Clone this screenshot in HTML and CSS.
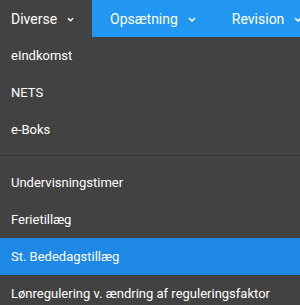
FILE: index.html
```html
<!DOCTYPE html>
<html lang="da">
<head>
  <meta charset="UTF-8">
  <title>Menu</title>
  <meta name="viewport" content="width=device-width, initial-scale=1.0">
  <link rel="stylesheet" href="styles.css">
</head>
<body>
  <nav class="topbar">
    <a class="tab aktiv" href="#">Diverse
      <svg class="pil" viewBox="0 0 8 5" width="8" height="5"><path d="M1 1l3 3 3-3" fill="none" stroke="currentColor" stroke-width="1.6"/></svg>
    </a>
    <a class="tab" href="#">Opsætning
      <svg class="pil" viewBox="0 0 8 5" width="8" height="5"><path d="M1 1l3 3 3-3" fill="none" stroke="currentColor" stroke-width="1.6"/></svg>
    </a>
    <a class="tab" href="#">Revision
      <svg class="pil" viewBox="0 0 8 5" width="8" height="5"><path d="M1 1l3 3 3-3" fill="none" stroke="currentColor" stroke-width="1.6"/></svg>
    </a>
  </nav>

  <ul class="dropdown">
    <li><a href="#">eIndkomst</a></li>
    <li><a href="#">NETS</a></li>
    <li><a href="#">e-Boks</a></li>
    <li class="skillelinje"></li>
    <li><a href="#">Undervisningstimer</a></li>
    <li><a href="#">Ferietillæg</a></li>
    <li><a class="valgt" href="#">St. Bededagstillæg</a></li>
    <li><a href="#">Lønregulering v. ændring af reguleringsfaktor</a></li>
  </ul>
</body>
</html>
```

FILE: styles.css
```css
body {
  margin: 0;
  background-color: #424242;
  font-family: Roboto, Arial, sans-serif;
  overflow: hidden;
}
.topbar {
  display: flex;
  height: 37px;
  background-color: #2196f3;
  white-space: nowrap;
  overflow: hidden;
}
.tab {
  display: flex;
  flex-shrink: 0;
  align-items: center;
  gap: 10px;
  padding: 0 18px;
  color: #fff;
  text-decoration: none;
  font-size: 14px;
}
.tab.aktiv {
  background-color: #424242;
  width: 92px;
  padding-left: 11px;
  box-sizing: border-box;
}
.pil {
  margin-top: 1px;
}
.dropdown {
  list-style: none;
  margin: 0;
  padding: 0;
  white-space: nowrap;
}
.dropdown a {
  display: block;
  height: 37px;
  line-height: 37px;
  padding: 0 11px;
  color: #fff;
  text-decoration: none;
  font-size: 13px;
}
.dropdown a.valgt {
  background-color: #1e88e5;
}
.skillelinje {
  height: 1px;
  margin: 7px 0 8px;
  background-color: #3a3a3a;
}
```
